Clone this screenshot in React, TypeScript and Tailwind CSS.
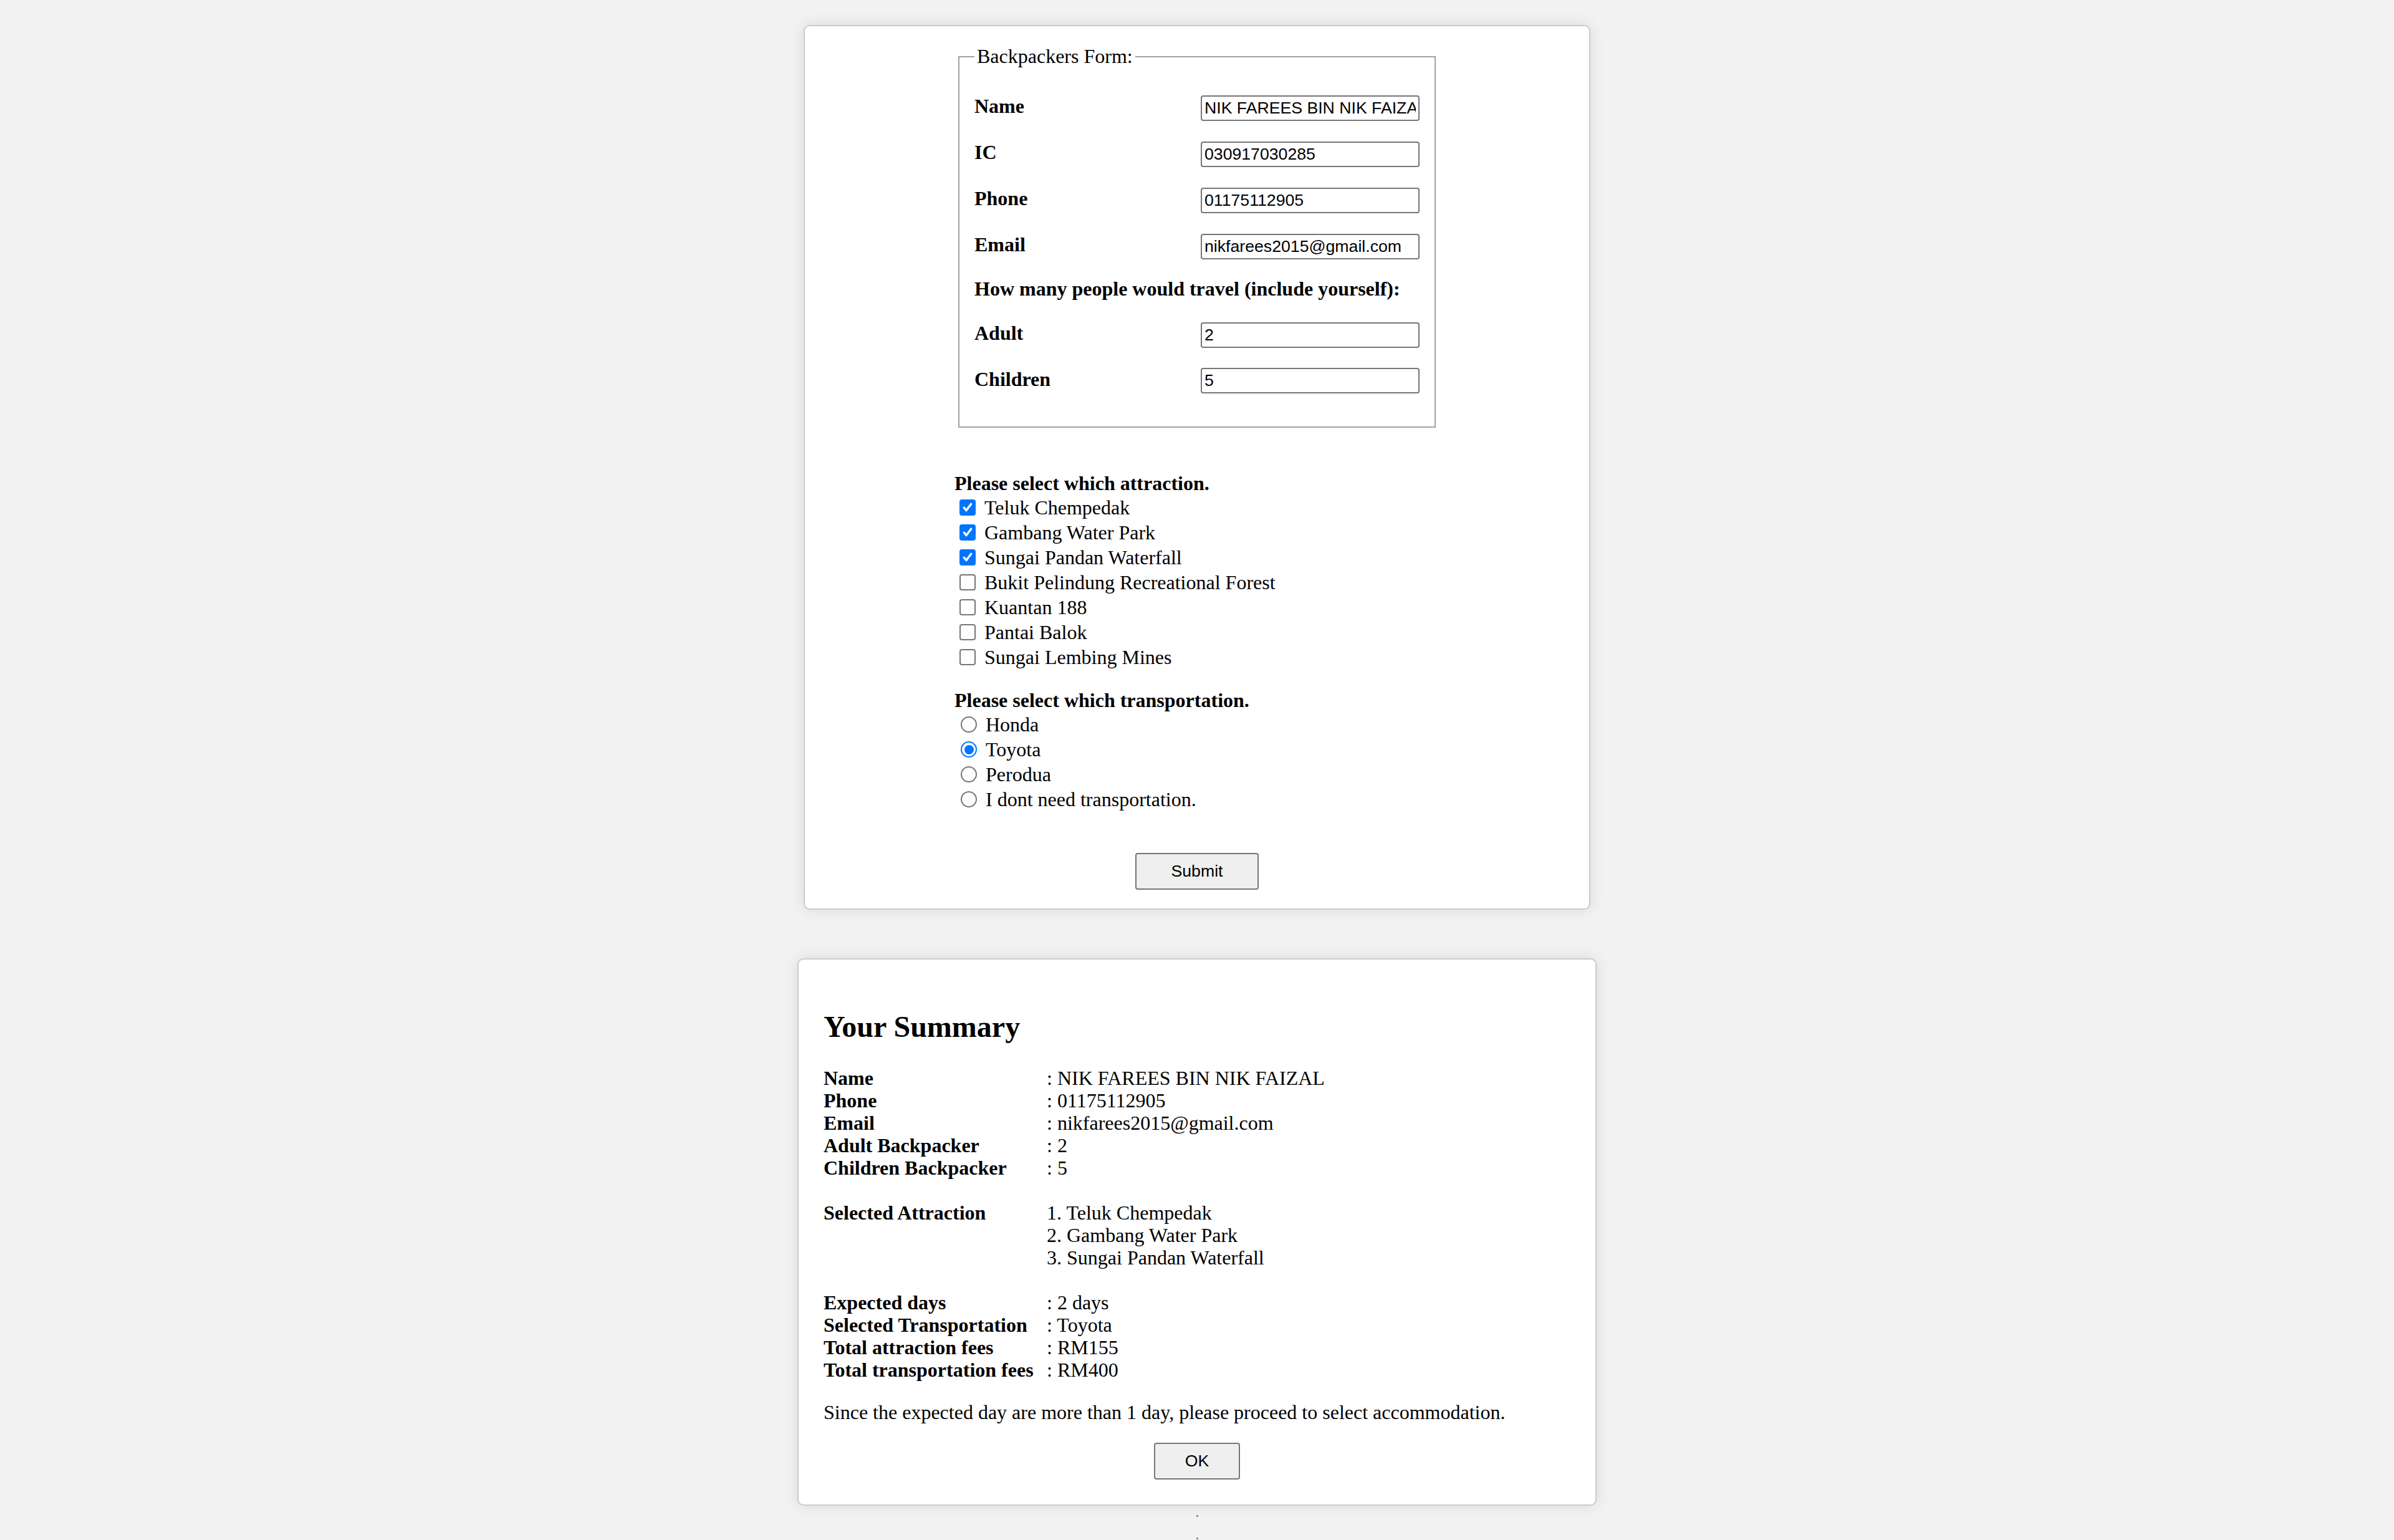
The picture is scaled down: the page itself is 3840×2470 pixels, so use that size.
import React from "react";

const fields = [
  { label: "Name", value: "NIK FAREES BIN NIK FAIZAL", row: "h-[74px]" },
  { label: "IC", value: "030917030285", row: "h-[74px]" },
  { label: "Phone", value: "01175112905", row: "h-[74px]" },
  { label: "Email", value: "nikfarees2015@gmail.com", row: "h-[74px]" },
];

const attractions = [
  { name: "Teluk Chempedak", checked: true },
  { name: "Gambang Water Park", checked: true },
  { name: "Sungai Pandan Waterfall", checked: true },
  { name: "Bukit Pelindung Recreational Forest", checked: false },
  { name: "Kuantan 188", checked: false },
  { name: "Pantai Balok", checked: false },
  { name: "Sungai Lembing Mines", checked: false },
];

const transports = [
  { name: "Honda", checked: false },
  { name: "Toyota", checked: true },
  { name: "Perodua", checked: false },
  { name: "I dont need transportation.", checked: false },
];

const Checkbox = ({ checked }: { checked: boolean }) =>
  checked ? (
    <span className="ml-[8px] flex h-[26px] w-[26px] shrink-0 items-center justify-center rounded-[4px] bg-[#0075ff]">
      <svg viewBox="0 0 26 26" className="h-[26px] w-[26px]">
        <path
          d="M7.2 13.2 11 17.6 18.6 7.4"
          fill="none"
          stroke="#fff"
          strokeWidth="3.4"
          strokeLinecap="round"
          strokeLinejoin="round"
        />
      </svg>
    </span>
  ) : (
    <span className="ml-[8px] h-[26px] w-[26px] shrink-0 rounded-[4px] border-2 border-[#767676] bg-white" />
  );

const Radio = ({ checked }: { checked: boolean }) =>
  checked ? (
    <span className="ml-[10px] flex h-[26px] w-[26px] shrink-0 items-center justify-center rounded-full border-2 border-[#0075ff] bg-white">
      <span className="h-[15px] w-[15px] rounded-full bg-[#0075ff]" />
    </span>
  ) : (
    <span className="ml-[10px] h-[26px] w-[26px] shrink-0 rounded-full border-2 border-[#767676] bg-white" />
  );

const TextInput = ({ value }: { value: string }) => (
  <input
    type="text"
    defaultValue={value}
    className="h-[41px] w-[351px] rounded-[4px] border-2 border-[#767676] bg-white px-[4px] font-['Liberation_Sans',Arial,sans-serif] text-[26.67px] leading-[30px] text-black outline-none"
  />
);

const summary = [
  ["Name", ": NIK FAREES BIN NIK FAIZAL"],
  ["Phone", ": 01175112905"],
  ["Email", ": nikfarees2015@gmail.com"],
  ["Adult Backpacker", ": 2"],
  ["Children Backpacker", ": 5"],
];

const fees = [
  ["Expected days", ": 2 days"],
  ["Selected Transportation", ": Toyota"],
  ["Total attraction fees", ": RM155"],
  ["Total transportation fees", ": RM400"],
];

export default function App() {
  return (
    <div className="min-h-[2470px] bg-[#f2f2f2] pt-[40px] font-['Liberation_Serif','Times_New_Roman',serif] text-[32px] leading-[37px] text-black">
      <div className="mx-auto w-[1262px] rounded-[10px] border-2 border-[#cccccc] bg-white px-[29px] py-[30px] shadow-[0_0_24px_rgba(0,0,0,0.10)]">
        <form className="mx-auto w-[778px]" onSubmit={(e) => e.preventDefault()}>
          <fieldset className="mx-[6px] border-2 border-[#a0a0a0] px-[24px] pb-[40px]">
            <legend className="px-[4px] leading-[37px]">Backpackers Form:</legend>
            <div className="pt-[27px]">
              {fields.map((f) => (
                <div key={f.label} className={`flex items-center justify-between ${f.row}`}>
                  <span className="pb-[5px] font-bold">{f.label}</span>
                  <TextInput value={f.value} />
                </div>
              ))}
              <div className="flex h-[65px] items-center pb-[2px] font-bold">
                How many people would travel (include yourself):
              </div>
              <div className="flex h-[80px] items-center justify-between">
                <span className="pb-[5px] font-bold">Adult</span>
                <TextInput value="2" />
              </div>
              <div className="flex h-[67px] items-center justify-between">
                <span className="pb-[5px] font-bold">Children</span>
                <TextInput value="5" />
              </div>
            </div>
          </fieldset>

          <p className="mt-[71px] font-bold">Please select which attraction.</p>
          {attractions.map((a) => (
            <label key={a.name} className="flex h-[40px] items-center">
              <Checkbox checked={a.checked} />
              <span className="ml-[14px]">{a.name}</span>
            </label>
          ))}

          <p className="mt-[31px] font-bold">Please select which transportation.</p>
          {transports.map((t) => (
            <label key={t.name} className="flex h-[40px] items-center">
              <Radio checked={t.checked} />
              <span className="ml-[14px]">{t.name}</span>
            </label>
          ))}

          <div className="mt-[66px] flex justify-center">
            <button
              type="submit"
              className="h-[59px] w-[198px] rounded-[4px] border-2 border-[#767676] bg-[#efefef] font-['Liberation_Sans',Arial,sans-serif] text-[26.67px] text-black"
            >
              Submit
            </button>
          </div>
        </form>
      </div>

      <div className="mx-auto mt-[78px] w-[1282px] rounded-[10px] border-2 border-[#cccccc] bg-white p-[40px] shadow-[0_0_24px_rgba(0,0,0,0.10)]">
        <h2 className="mb-[37px] mt-[40px] text-[48px] font-bold leading-[55px]">Your Summary</h2>
        <div className="grid grid-cols-[358px_1fr] leading-[36px]">
          {summary.map(([k, v]) => (
            <React.Fragment key={k}>
              <span className="font-bold">{k}</span>
              <span>{v}</span>
            </React.Fragment>
          ))}
          <span className="col-span-2 h-[36px]" />
          <span className="font-bold">Selected Attraction</span>
          <span>
            1. Teluk Chempedak
            <br />
            2. Gambang Water Park
            <br />
            3. Sungai Pandan Waterfall
          </span>
          <span className="col-span-2 h-[36px]" />
          {fees.map(([k, v]) => (
            <React.Fragment key={k}>
              <span className="font-bold">{k}</span>
              <span>{v}</span>
            </React.Fragment>
          ))}
        </div>
        <p className="mt-[32px] leading-[36px]">
          Since the expected day are more than 1 day, please proceed to select accommodation.
        </p>
        <div className="mt-[31px] flex justify-center">
          <button
            type="button"
            className="h-[59px] w-[138px] rounded-[4px] border-2 border-[#767676] bg-[#efefef] font-['Liberation_Sans',Arial,sans-serif] text-[26.67px] text-black"
          >
            OK
          </button>
        </div>
      </div>

      <div className="flex flex-col items-center pt-[15px]">
        <span className="h-[36px] w-[3px]">
          <span className="block h-[3px] w-[3px] bg-[#8a8a8a]" />
        </span>
        <span className="h-[36px] w-[3px]">
          <span className="block h-[3px] w-[3px] bg-[#8a8a8a]" />
        </span>
      </div>
    </div>
  );
}
